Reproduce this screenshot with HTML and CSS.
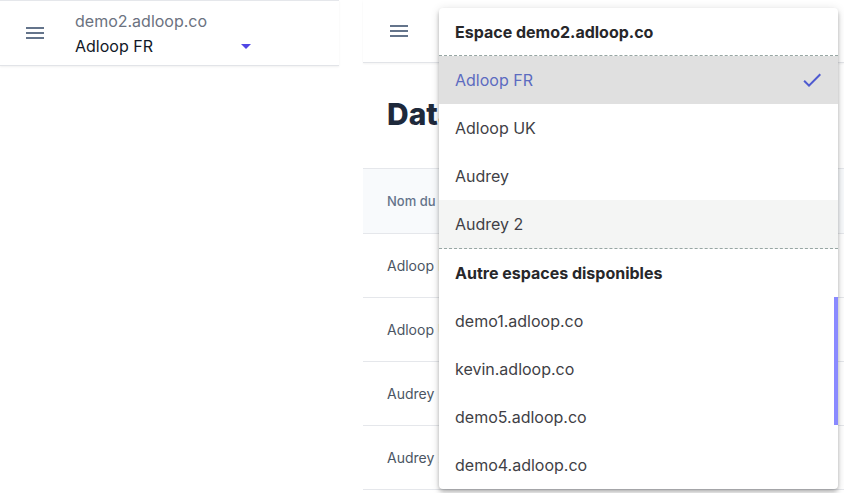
FILE: index.html
```html
<!DOCTYPE html>
<html lang="fr">
<head>
<meta charset="utf-8">
<link rel="stylesheet" href="styles.css">
</head>
<body>
<div class="page">
  <aside class="left">
    <header class="left-header">
      <svg class="menu-icon" viewBox="0 0 24 24" width="24" height="24"><path d="M3 18h18v-2H3v2zm0-5h18v-2H3v2zm0-7v2h18V6H3z"/></svg>
      <div class="space-picker">
        <div class="space-domain">demo2.adloop.co</div>
        <div class="space-current"><span>Adloop FR</span><span class="caret"></span></div>
      </div>
    </header>
  </aside>
  <main class="right">
    <header class="right-header">
      <svg class="menu-icon" viewBox="0 0 24 24" width="24" height="24"><path d="M3 18h18v-2H3v2zm0-5h18v-2H3v2zm0-7v2h18V6H3z"/></svg>
    </header>
    <h1 class="title">Data</h1>
    <div class="table">
      <div class="thead">Nom du compte</div>
      <div class="row">Adloop FR</div>
      <div class="row">Adloop UK</div>
      <div class="row">Audrey</div>
      <div class="row">Audrey 2</div>
    </div>
  </main>

  <div class="dropdown">
    <div class="dd-head dd-sep">Espace demo2.adloop.co</div>
    <div class="dd-item selected"><span>Adloop FR</span>
      <svg class="check" viewBox="0 0 24 24" width="24" height="24"><path d="M9 16.17L4.83 12l-1.42 1.41L9 19 21 7l-1.41-1.41z"/></svg>
    </div>
    <div class="dd-item">Adloop UK</div>
    <div class="dd-item">Audrey</div>
    <div class="dd-item hover dd-sep last">Audrey 2</div>
    <div class="dd-head">Autre espaces disponibles</div>
    <div class="dd-item">demo1.adloop.co</div>
    <div class="dd-item">kevin.adloop.co</div>
    <div class="dd-item">demo5.adloop.co</div>
    <div class="dd-item">demo4.adloop.co</div>
    <div class="dd-thumb"></div>
  </div>
</div>
</body>
</html>
```

FILE: styles.css
```css
* { box-sizing: border-box; }
html, body { margin: 0; padding: 0; background: #fff; }
body {
  font-family: Inter, "Noto Sans", sans-serif;
  color: #374151;
  width: 844px;
  height: 493px;
  overflow: hidden;
}
.page {
  position: relative;
  display: flex;
  gap: 24px;
  height: 493px;
}
.left {
  width: 339px;
  flex: none;
}
.left-header {
  height: 66px;
  border-top: 1px solid #e5e7eb;
  border-bottom: 1px solid #e2e4e8;
  box-shadow: 0 1px 2px rgba(0,0,0,0.06);
  display: flex;
  align-items: center;
  padding-left: 23px;
  gap: 28px;
}
.menu-icon { fill: #64748b; flex: none; }
.space-picker {
  display: flex;
  flex-direction: column;
  width: 176px;
}
.space-domain {
  font-size: 16px;
  line-height: 24px;
  color: #6b7280;
}
.space-current {
  font-size: 16px;
  line-height: 24px;
  color: #111827;
  margin-top: 1px;
  display: flex;
  justify-content: space-between;
  align-items: center;
}
.caret {
  width: 0; height: 0;
  border-left: 5px solid transparent;
  border-right: 5px solid transparent;
  border-top: 5px solid #5046e5;
  margin-top: 2px;
}
.right { flex: 1; min-width: 0; }
.right-header {
  height: 63px;
  border-bottom: 1px solid #e2e4e8;
  box-shadow: 0 1px 2px rgba(0,0,0,0.05);
  display: flex;
  align-items: center;
  padding-left: 24px;
}
.title {
  margin: 0;
  height: 105px;
  padding: 31px 0 0 24px;
  font-size: 30px;
  line-height: 40px;
  font-weight: 800;
  color: #1e293b;
  white-space: nowrap;
}
.table { border-top: 1px solid #e5e7eb; }
.thead {
  height: 65px;
  background: #f8fafc;
  border-bottom: 1px solid #e5e7eb;
  display: flex;
  align-items: center;
  padding-left: 24px;
  font-size: 13px;
  font-weight: 500;
  color: #64748b;
}
.row {
  height: 64px;
  border-bottom: 1px solid #e5e7eb;
  display: flex;
  align-items: center;
  padding-left: 24px;
  font-size: 14px;
  color: #4b5563;
}
.dropdown {
  position: absolute;
  left: 439px;
  top: 8px;
  width: 399px;
  height: 481px;
  background: #fff;
  border-radius: 4px;
  overflow: hidden;
  box-shadow: 0 2px 4px -1px rgba(0,0,0,0.2), 0 4px 5px 0 rgba(0,0,0,0.14), 0 1px 10px 0 rgba(0,0,0,0.12);
}
.dd-head {
  height: 48px;
  display: flex;
  align-items: center;
  padding-left: 16px;
  font-size: 16px;
  font-weight: 700;
  color: #27272a;
}
.dd-item {
  height: 48px;
  display: flex;
  align-items: center;
  justify-content: space-between;
  padding: 0 14px 0 16px;
  font-size: 16px;
  color: #3f3f46;
}
.dd-sep { border-bottom: 1px dashed #97a6a3; }
.dd-item.last { height: 49px; }
.dd-item.selected { background: #e0e0e0; color: #5c6bc0; }
.dd-item.hover { background: #f4f5f4; }
.check { fill: #4f5bd0; }
.dd-thumb {
  position: absolute;
  right: 0;
  top: 289px;
  width: 4px;
  height: 128px;
  background: #8a8aff;
}
```
